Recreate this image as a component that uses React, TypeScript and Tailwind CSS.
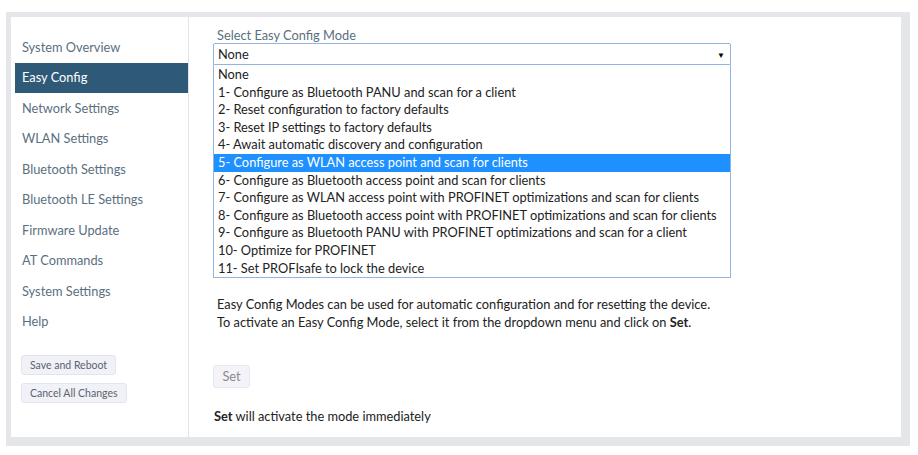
import React from "react";

const NAV = [
  "System Overview",
  "Easy Config",
  "Network Settings",
  "WLAN Settings",
  "Bluetooth Settings",
  "Bluetooth LE Settings",
  "Firmware Update",
  "AT Commands",
  "System Settings",
  "Help",
];

const MODES = [
  "None",
  "1- Configure as Bluetooth PANU and scan for a client",
  "2- Reset configuration to factory defaults",
  "3- Reset IP settings to factory defaults",
  "4- Await automatic discovery and configuration",
  "5- Configure as WLAN access point and scan for clients",
  "6- Configure as Bluetooth access point and scan for clients",
  "7- Configure as WLAN access point with PROFINET optimizations and scan for clients",
  "8- Configure as Bluetooth access point with PROFINET optimizations and scan for clients",
  "9- Configure as Bluetooth PANU with PROFINET optimizations and scan for a client",
  "10- Optimize for PROFINET",
  "11- Set PROFIsafe to lock the device",
];

const ACTIVE_NAV = "Easy Config";
const HIGHLIGHTED = 5;

export default function App() {
  return (
    <div className="w-[918px] h-[455px] bg-white pt-[12px] pl-[6px] font-['Lato',sans-serif] text-[12.8px]">
      <div className="w-[904px] h-[434px] bg-[#e4e6e9] pt-[5px] pl-[5px] pr-[9px] pb-[9px]">
        <div className="flex h-full bg-white">
          {/* Sidebar */}
          <div className="w-[178px] border-r border-[#e3e3e3] pt-[15px] pl-[4px]">
            {NAV.map((item) => {
              const active = item === ACTIVE_NAV;
              return (
                <div
                  key={item}
                  className={
                    active
                      ? "h-[30.5px] flex items-center pl-[7px] bg-[#2f5a77] text-white"
                      : "h-[30.5px] flex items-center pl-[7px] text-[#5b6f80]"
                  }
                >
                  {item}
                </div>
              );
            })}
            <div className="flex flex-col items-start gap-[8px] mt-[18px] pl-[6px]">
              <button className="h-[20px] px-[8px] rounded-[3px] bg-[#f1f1f8] border border-[#e4e4ee] text-[#5b6270] text-[10.5px] leading-none">
                Save and Reboot
              </button>
              <button className="h-[20px] px-[8px] rounded-[3px] bg-[#f1f1f8] border border-[#e4e4ee] text-[#5b6270] text-[10.5px] leading-none">
                Cancel All Changes
              </button>
            </div>
          </div>

          {/* Main */}
          <div className="flex-1 pl-[24px] pt-[10px]">
            <div className="pl-[4px] h-[16px] leading-[16px] text-[#5b6f80]">Select Easy Config Mode</div>
            <div className="w-[518px]">
              <div className="h-[22px] border border-[#93b3e2] rounded-t-[2px] flex items-center justify-between pl-[4px] pr-[5px] pt-px text-[#222]">
                <span>None</span>
                <span className="text-[8px] text-black">▼</span>
              </div>
              <div className="border border-t-0 border-[#93b3e2] text-[#222] pt-px">
                {MODES.map((m, i) => (
                  <div
                    key={m}
                    className={
                      i === HIGHLIGHTED
                        ? "h-[17.6px] leading-[17.6px] pl-[4px] bg-[#1e90ff] text-white"
                        : "h-[17.6px] leading-[17.6px] pl-[4px]"
                    }
                  >
                    {m}
                  </div>
                ))}
              </div>
            </div>

            <div className="mt-[17px] pl-[4px] leading-[18px] text-[#222]">
              <p>Easy Config Modes can be used for automatic configuration and for resetting the device.</p>
              <p>
                To activate an Easy Config Mode, select it from the dropdown menu and click on <b>Set</b>.
              </p>
            </div>

            <button className="mt-[34px] h-[23px] w-[37px] rounded-[3px] bg-[#f3f3f9] border border-[#e8e8f0] text-[#8a8a90]">
              Set
            </button>

            <p className="mt-[19px] pl-[1px] text-[#222]">
              <b>Set</b> will activate the mode immediately
            </p>
          </div>
        </div>
      </div>
    </div>
  );
}
